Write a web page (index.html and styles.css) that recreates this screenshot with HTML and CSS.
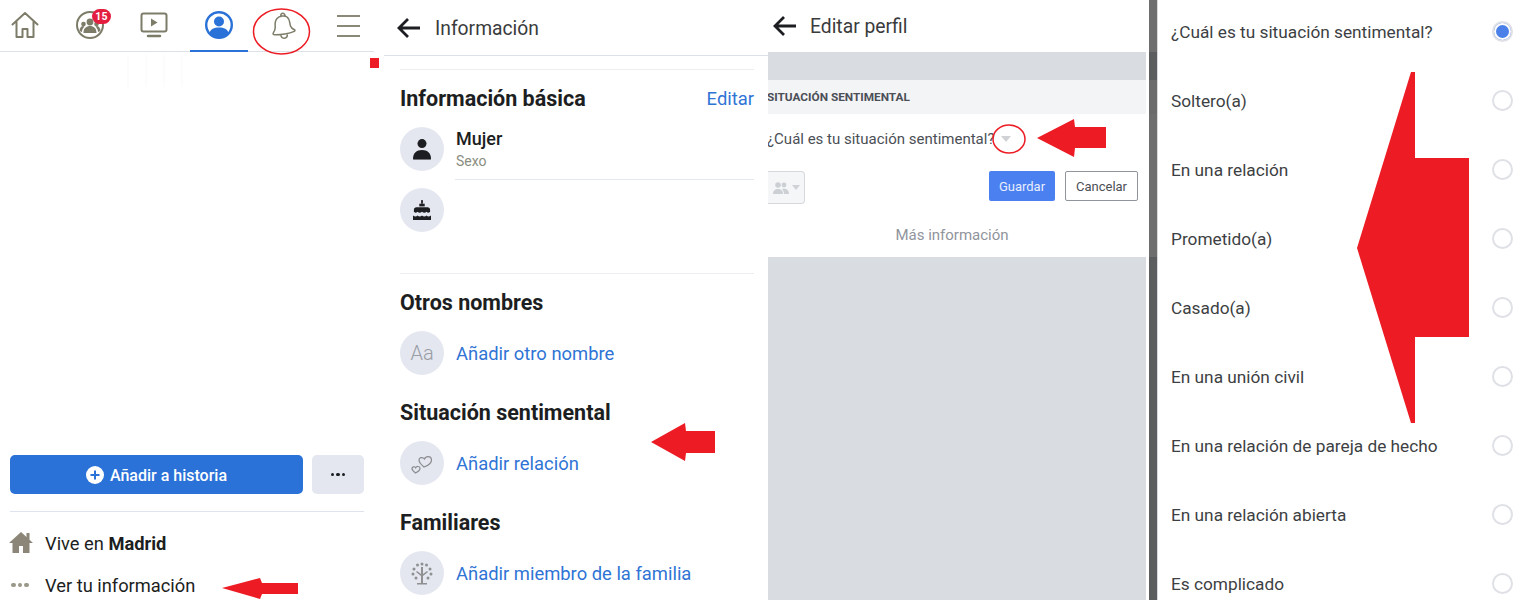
FILE: index.html
```html
<!DOCTYPE html>
<html lang="es">
<head>
  <meta charset="UTF-8">
  <title>Situación sentimental</title>
  <link rel="stylesheet" href="styles.css">
</head>
<body>
  <div class="page">

    <section class="panel profile">
      <nav class="tabs">
        <div class="tab">
          <svg width="30" height="30" viewBox="0 0 30 30" class="icon-line"><path d="M2.5 14.5 15 3l12.500 11.500M6.500 12v15h6v-8h5v8h6V12"/></svg>
        </div>
        <div class="tab">
          <span class="friends">
            <svg width="30" height="30" viewBox="0 0 30 30"><circle cx="15" cy="15" r="13" class="ring"/><circle cx="15" cy="12" r="3.400" class="solid"/><circle cx="8.500" cy="14" r="2.300" class="solid"/><circle cx="21.500" cy="14" r="2.300" class="solid"/><path d="M8.500 23c0-5 3-7 6.500-7s6.500 2 6.500 7zM4.500 21c0-3 1.500-5 4-5l1 .5c-1.500 1.500-2.500 3-2.500 5.500zM25.500 21c0-3-1.500-5-4-5l-1 .5c1.500 1.500 2.500 3 2.500 5.500z" class="solid"/></svg>
            <b class="badge">15</b>
          </span>
        </div>
        <div class="tab">
          <svg width="30" height="30" viewBox="0 0 30 30" class="icon-line"><rect x="2.500" y="3.500" width="25" height="18" rx="2"/><path d="M9 26h12" class="thick"/><path d="M12 8.500v8l6.500-4z" class="solid"/></svg>
        </div>
        <div class="tab tab-active">
          <svg width="30" height="30" viewBox="0 0 30 30"><circle cx="15" cy="15" r="12.800" class="blue-ring"/><circle cx="15" cy="11.500" r="5" class="blue"/><path d="M5.500 23c1-4 4.500-5.500 9.500-5.500s8.500 1.500 9.500 5.500c-2.500 2.800-5.800 4.500-9.500 4.500s-7-1.700-9.500-4.500z" class="blue"/></svg>
        </div>
        <div class="tab">
          <svg width="30" height="30" viewBox="0 0 30 30" class="icon-line thin"><path d="M12 6.500c-.5-1.500 0-3 1.500-3.200s2.500 1 2.500 2.400M8 8.500c2.300-2.500 7.500-3.500 10-1.500 3 2.300 2.500 6 3.500 9 .6 2 2.500 3 4 3.700.8.500.5 1.300-.3 1.600-4.500 2.200-14 3.800-20 3.400-1 0-1.500-.8-1-1.500 1-1.600 2.300-3.700 2-6-.3-3-.2-6.500 1.800-8.700zM12 25.800c.5 2 2.300 2.800 4 2.300s2.500-2 2.300-3.500"/></svg>
        </div>
        <div class="tab">
          <span class="burger"><i></i><i></i><i></i></span>
        </div>
      </nav>
      <div class="mark"></div>
      <div class="faint"></div>
      <div class="profile-bottom">
        <div class="story-row">
          <button class="story-btn">
            <svg width="18" height="18" viewBox="0 0 18 18"><circle cx="9" cy="9" r="9" class="white"/><path d="M9 4.500v9M4.500 9h9" class="plus"/></svg>
            Añadir a historia
          </button>
          <button class="more-btn"><i></i><i></i><i></i></button>
        </div>
        <div class="bio">
          <div class="bio-row">
            <svg width="24" height="22" viewBox="0 0 24 22" class="home-solid"><path d="M12 0 0 11h3.500v10h6.500v-7h4v7h6.500V11H24l-3.500-3.200V1h-3v4z"/></svg>
            <span>Vive en <b>Madrid</b></span>
          </div>
          <div class="bio-row">
            <span class="dots"><i></i><i></i><i></i></span>
            <span>Ver tu información</span>
          </div>
        </div>
      </div>
    </section>

    <section class="panel info">
      <header class="bar bar-info">
        <svg width="26" height="22" viewBox="0 0 26 22" class="back"><path d="M24 11H3M12 2l-9 9 9 9"/></svg>
        <span>Información</span>
      </header>
      <div class="info-body">
        <hr class="rule">
        <div class="info-head">
          <h2>Información básica</h2>
          <a class="link">Editar</a>
        </div>
        <div class="info-row">
          <span class="disc">
            <svg width="22" height="24" viewBox="0 0 22 24" class="dark"><circle cx="11" cy="6" r="5"/><path d="M1 23c0-7 4-10 10-10s10 3 10 10c0 .6-.4 1-1 1H2c-.6 0-1-.4-1-1z"/></svg>
          </span>
          <div class="row-text">
            <strong>Mujer</strong>
            <small>Sexo</small>
          </div>
        </div>
        <div class="info-row row-birthday">
          <span class="disc">
            <svg width="22" height="24" viewBox="0 0 22 24" class="dark"><rect x="10" y="1" width="2" height="4"/><rect x="8" y="5" width="6" height="3"/><path d="M2 12c0-2 1-3 3-3h12c2 0 3 1 3 3v2c-1.500 1.500-2.600 1.500-4 0-1.300 1.500-3.600 1.500-5 0-1.400 1.500-3.700 1.500-5 0-1.400 1.500-2.500 1.500-4 0z"/><path d="M1 18c2 1.600 3.700 1.600 5 0 1.300 1.600 3.700 1.600 5 0 1.300 1.600 3.700 1.600 5 0 1.300 1.600 3 1.600 5 0v5H1z"/></svg>
          </span>
        </div>
        <hr class="rule rule-mid">
        <h2 class="first-h">Otros nombres</h2>
        <div class="info-row link-row">
          <span class="disc disc-aa">Aa</span>
          <a class="link">Añadir otro nombre</a>
        </div>
        <h2>Situación sentimental</h2>
        <div class="info-row link-row">
          <span class="disc">
            <svg width="24" height="24" viewBox="0 0 24 24" class="hearts"><path d="M14 16c-3-2.500-5-4.500-5-7 0-2.500 3.500-3.500 5.500-1 1-3 6.500-3.500 7 .5.300 3-3.500 6-7.500 7.500z"/><path d="M5.500 22c-2-1.500-3.500-2.700-3.500-4.500s2.500-2.500 3.700-.7c.8-1.800 4-1.800 4.300.2.200 2-2 3.800-4.500 5z"/></svg>
          </span>
          <a class="link">Añadir relación</a>
        </div>
        <h2>Familiares</h2>
        <div class="info-row link-row">
          <span class="disc">
            <svg width="24" height="24" viewBox="0 0 24 24" class="tree"><path d="M11 23v-8L6 11l1-1 4 3V6h2v7l4-3 1 1-5 4v8z"/><circle cx="12" cy="3" r="1.500"/><circle cx="7.500" cy="4" r="1.500"/><circle cx="16.500" cy="4" r="1.500"/><circle cx="4" cy="8" r="1.500"/><circle cx="20" cy="8" r="1.500"/><circle cx="3" cy="13" r="1.500"/><circle cx="21" cy="13" r="1.500"/><circle cx="6" cy="17" r="1.500"/><circle cx="18" cy="17" r="1.500"/><rect x="7" y="22" width="10" height="1.500"/></svg>
          </span>
          <a class="link">Añadir miembro de la familia</a>
        </div>
      </div>
    </section>

    <section class="panel edit">
      <header class="bar bar-edit">
        <svg width="26" height="22" viewBox="0 0 26 22" class="back"><path d="M24 11H3M12 2l-9 9 9 9"/></svg>
        <span>Editar perfil</span>
      </header>
      <div class="band"></div>
      <div class="edit-title">SITUACIÓN SENTIMENTAL</div>
      <div class="edit-form">
        <div class="question">¿Cuál es tu situación sentimental?<i class="caret"></i></div>
        <div class="form-actions">
          <span class="privacy">
            <svg width="16" height="12" viewBox="0 0 16 12" class="people"><circle cx="5" cy="3" r="2.800"/><circle cx="11" cy="3" r="2.400"/><path d="M0 12c0-3.500 2-5 5-5s5 1.500 5 5zM11 12c0-2-.6-3.500-2-4.800 3-1 7 0 7 4.800z"/></svg>
            <i class="caret caret-small"></i>
          </span>
          <button class="save">Guardar</button>
          <button class="cancel">Cancelar</button>
        </div>
        <div class="more-info">Más información</div>
      </div>
      <div class="band band-fill"></div>
    </section>

    <div class="scrim"></div>

    <ul class="panel options">
      <li class="selected">¿Cuál es tu situación sentimental?<i class="radio"></i></li>
      <li>Soltero(a)<i class="radio"></i></li>
      <li>En una relación<i class="radio"></i></li>
      <li>Prometido(a)<i class="radio"></i></li>
      <li>Casado(a)<i class="radio"></i></li>
      <li>En una unión civil<i class="radio"></i></li>
      <li>En una relación de pareja de hecho<i class="radio"></i></li>
      <li>En una relación abierta<i class="radio"></i></li>
      <li>Es complicado<i class="radio"></i></li>
    </ul>

    <!-- red marks drawn on top of the screenshots -->
    <svg class="marks" width="1524" height="600" viewBox="0 0 1524 600">
      <ellipse cx="281.500" cy="31.500" rx="28" ry="22.500" class="ring-mark"/>
      <ellipse cx="1009" cy="139" rx="16" ry="14" class="ring-mark"/>
      <path d="M222 588 260 578 262 583H298V594H262L260 599z" class="arrow"/>
      <path d="M651 442 685 423 686 431H715V453H686L685 461z" class="arrow"/>
      <path d="M1037 138 1074 119 1075 127H1106V148H1075L1074 157z" class="arrow"/>
      <path d="M1357 248 1411 72H1415V158H1469V337H1415V423H1411z" class="arrow"/>
    </svg>
  </div>
</body>
</html>
```

FILE: styles.css
```css
* {
  margin: 0;
  padding: 0;
  box-sizing: border-box;
}

body {
  font-family: Roboto, "Liberation Sans", sans-serif;
  background: white;
  color: #1c1e21;
  overflow: hidden;
}

.page {
  position: relative;
  display: flex;
  width: 1524px;
  height: 600px;
  overflow: hidden;
}

.panel {
  height: 600px;
  background: white;
}

/* first screenshot */
.profile {
  position: relative;
  width: 384px;
  padding-right: 20px;
  display: flex;
  flex-direction: column;
}

.tabs {
  display: flex;
  height: 52px;
  width: 374px;
  border-bottom: 1px solid #dde1ea;
  flex-shrink: 0;
}

.tab {
  position: relative;
  left: -7px;
  width: 64.600px;
  height: 51px;
  padding-top: 10px;
  display: flex;
  justify-content: center;
  flex-shrink: 0;
}

.tab svg {
  display: block;
  fill: none;
}

.tab-active::after {
  content: "";
  position: absolute;
  left: 3px;
  right: 3px;
  bottom: -1px;
  height: 2px;
  background: #2a71d8;
}

.icon-line {
  stroke: #7d7c69;
  stroke-width: 2;
  stroke-linejoin: round;
  stroke-linecap: round;
}

.icon-line.thin {
  stroke-width: 1.500;
}

.thick {
  stroke-width: 2.500;
}

.solid {
  fill: #7d7c69;
  stroke: none;
}

.ring {
  fill: none;
  stroke: #7d7c69;
  stroke-width: 2;
}

.blue-ring {
  fill: white;
  stroke: #2a71d8;
  stroke-width: 2.400;
}

.blue {
  fill: #2a71d8;
}

.friends {
  position: relative;
  display: block;
}

.badge {
  position: absolute;
  left: 17px;
  top: -1px;
  width: 19px;
  height: 15px;
  border-radius: 8px;
  background: #e41e3f;
  color: white;
  font-size: 10.500px;
  line-height: 15px;
  text-align: center;
}

.burger {
  display: flex;
  flex-direction: column;
  gap: 8px;
  width: 23px;
  padding-top: 5px;
}

.burger i {
  height: 2px;
  background: #8a8977;
}

.mark {
  width: 9px;
  height: 10px;
  margin: 6px 0 0 370px;
  background: #ed1c24;
  flex-shrink: 0;
}

.faint {
  width: 56px;
  height: 32px;
  margin: -13px 0 0 127px;
  background: repeating-linear-gradient(90deg, #fcfcfc 0 2px, white 2px 18px);
  flex-shrink: 0;
}

.profile-bottom {
  margin-top: auto;
  padding-left: 10px;
}

.story-row {
  display: flex;
  gap: 9px;
}

.story-btn {
  display: flex;
  align-items: center;
  justify-content: center;
  gap: 6px;
  width: 293px;
  height: 39px;
  padding-top: 1px;
  border: none;
  border-radius: 5px;
  background: #2a71d8;
  color: white;
  font-family: inherit;
  font-size: 16px;
  font-weight: 500;
}

.white {
  fill: white;
}

.plus {
  stroke: #2a71d8;
  stroke-width: 2;
}

.more-btn {
  display: flex;
  align-items: center;
  justify-content: center;
  gap: 2px;
  width: 52px;
  height: 39px;
  border: none;
  border-radius: 5px;
  background: #e4e7f0;
}

.more-btn i {
  width: 3.500px;
  height: 3.500px;
  border-radius: 50%;
  background: #1c1e21;
}

.bio {
  margin-top: 17px;
  padding-top: 10px;
  height: 89px;
  width: 354px;
  border-top: 1px solid #dfe3ee;
}

.bio-row {
  display: flex;
  align-items: center;
  height: 42px;
  font-size: 18.300px;
  color: #1c1e21;
}

.bio-row svg,
.dots {
  width: 24px;
  margin-left: -1px;
  margin-right: 12px;
  flex-shrink: 0;
}

.home-solid {
  fill: #8b8678;
}

.dots {
  display: flex;
  gap: 2px;
  padding-left: 2px;
}

.dots i {
  width: 4.500px;
  height: 4.500px;
  border-radius: 50%;
  background: #9a9888;
}

/* second screenshot */
.info {
  width: 384px;
}

.bar {
  display: flex;
  align-items: center;
  font-size: 19.300px;
  color: #3a3b3c;
}

.bar-info {
  height: 56px;
  padding: 1px 0 0 12px;
  gap: 13px;
  border-bottom: 1px solid #dde1ea;
}

.back {
  fill: none;
  stroke: #1c1e21;
  stroke-width: 2.800;
  flex-shrink: 0;
}

.info-body {
  padding: 13px 14px 0 16px;
}

.rule {
  border: none;
  height: 1px;
  background: #eceef2;
}

.info-head {
  display: flex;
  justify-content: space-between;
  align-items: center;
  margin-top: 14px;
}

h2 {
  padding-top: 1px;
  font-size: 21.500px;
  font-weight: 700;
  line-height: 27px;
  color: #1c1e21;
  margin-top: 23px;
}

.info-head h2 {
  margin-top: 0;
}

.first-h {
  margin-top: 14px;
}

.link {
  font-size: 18.400px;
  color: #2f74d5;
}

.info-row {
  display: flex;
  gap: 12px;
  margin-top: 15px;
}

.link-row {
  align-items: center;
}

.row-birthday {
  margin-top: 8px;
}

.disc {
  display: flex;
  align-items: center;
  justify-content: center;
  width: 44px;
  height: 44px;
  border-radius: 50%;
  background: #e4e7f0;
  flex-shrink: 0;
}

.disc-aa {
  font-size: 20px;
  color: #9a9da5;
  font-weight: 300;
}

.dark {
  fill: #1c1e21;
  transform: scale(0.9);
}

.hearts {
  fill: none;
  stroke: #8a8b8e;
  stroke-width: 1.200;
}

.tree {
  fill: #8f9092;
}

.row-text {
  flex: 1;
  height: 53px;
  border-bottom: 1px solid #e4e7f0;
  margin-left: -1px;
}

.row-text strong {
  display: block;
  font-size: 18px;
  font-weight: 500;
  line-height: 24px;
  padding-left: 1px;
}

.row-text small {
  display: block;
  font-size: 14px;
  line-height: 20px;
  color: #8a8d7e;
  padding-left: 1px;
}

.rule-mid {
  margin-top: 41px;
}

/* third screenshot */
.edit {
  width: 378px;
  display: flex;
  flex-direction: column;
  overflow: hidden;
}

.bar-edit {
  height: 52px;
  padding-left: 4px;
  gap: 12px;
  flex-shrink: 0;
}

.band {
  height: 28px;
  background: #d9dce1;
  flex-shrink: 0;
}

.band-fill {
  flex: 1;
}

.edit-title {
  height: 34px;
  line-height: 35px;
  margin-left: -1px;
  background: #f3f4f6;
  font-size: 11.800px;
  font-weight: 700;
  color: #4b4f56;
  flex-shrink: 0;
}

.edit-form {
  height: 143px;
  padding-top: 15px;
  flex-shrink: 0;
}

.question {
  display: flex;
  align-items: center;
  height: 20px;
  margin-left: -1px;
  font-size: 15px;
  color: #4b4f56;
  white-space: nowrap;
}

.caret {
  width: 0;
  height: 0;
  margin-left: 6px;
  border-left: 5px solid transparent;
  border-right: 5px solid transparent;
  border-top: 6px solid #d0d2d6;
}

.caret-small {
  margin-left: 3px;
  border-left-width: 4px;
  border-right-width: 4px;
  border-top-width: 5px;
}

.form-actions {
  display: flex;
  align-items: flex-start;
  margin-top: 22px;
  padding-right: 8px;
}

.privacy {
  display: flex;
  align-items: center;
  justify-content: center;
  width: 37px;
  height: 33px;
  margin-right: auto;
  border: 1px solid #d6d8dc;
  border-left: none;
  border-radius: 0 4px 4px 0;
  background: #f5f6f7;
}

.people {
  fill: #ccd0d5;
}

.form-actions button {
  height: 30px;
  border-radius: 2px;
  font-family: inherit;
  font-size: 13px;
}

.save {
  width: 66px;
  border: none;
  background: #4a80f0;
  color: #e8eefc;
  margin-right: 10px;
}

.cancel {
  width: 73px;
  border: 1px solid #90949c;
  background: white;
  color: #4b4f56;
}

.more-info {
  margin-top: 21px;
  padding-right: 10px;
  text-align: center;
  font-size: 15px;
  line-height: 20px;
  color: #90949c;
}

/* dimmed edge between the third and fourth screenshots */
.scrim {
  width: 12px;
  height: 600px;
  flex-shrink: 0;
  background:
    linear-gradient(90deg, white 0 3px, transparent 3px 11px, #d6d8db 11px),
    linear-gradient(180deg, #6e6e6e 0 52px, #5c5d5f 52px 80px, #6b6b6c 80px 114px, #6e6e6e 114px 257px, #5c5d5f 257px);
}

/* fourth screenshot */
.options {
  width: 366px;
  list-style: none;
  padding: 0 0 0 13px;
  margin-top: -3px;
}

.options li {
  display: flex;
  align-items: center;
  justify-content: space-between;
  height: 69px;
  padding-right: 11px;
  font-size: 17.250px;
  color: #3d3f43;
}

.radio {
  width: 21px;
  height: 21px;
  border: 2px solid #dfe1e6;
  border-radius: 50%;
  flex-shrink: 0;
}

.selected .radio {
  background: #4a80e8;
  box-shadow: inset 0 0 0 2px white;
}

/* red marks */
.marks {
  position: absolute;
  left: 0;
  top: 0;
}

.arrow {
  fill: #ed1c24;
}

.ring-mark {
  fill: none;
  stroke: #ed1c24;
  stroke-width: 1.500;
}
```
